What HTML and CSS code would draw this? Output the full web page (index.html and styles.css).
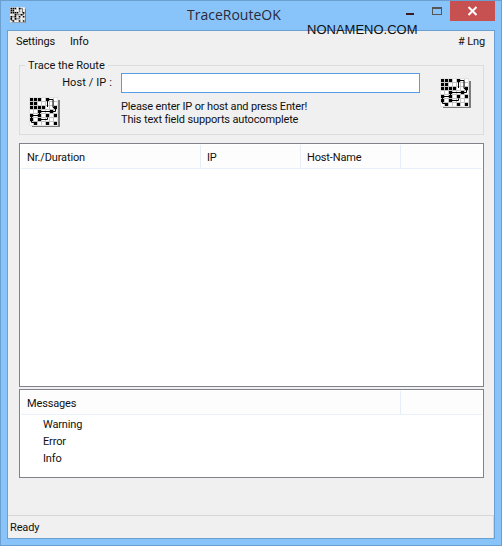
FILE: index.html
```html
<!DOCTYPE html>
<html lang="en">
<head>
    <meta charset="UTF-8">
    <meta name="viewport" content="width=device-width, initial-scale=1.0">
    <title>TraceRouteOK</title>
    <link rel="stylesheet" href="styles.css">
</head>
<body>

<svg class="defs" width="0" height="0">
    <symbol id="routeIcon" viewBox="0 0 31 30">
        <rect x="3" y="3" width="28" height="27" fill="#7c7c7c"/>
        <rect x="0" y="0" width="29" height="29" fill="#e4e4e4"/>
        <rect x="1" y="1" width="27" height="27" fill="#fff"/>
        <path d="M4.500 1v27M8.500 1v27M12.500 1v27M16.500 1v27M20.500 1v27M24.500 1v27M1 4.500h27M1 8.500h27M1 12.500h27M1 16.500h27M1 20.500h27M1 24.500h27" fill="none" stroke="#c4c4c4" stroke-width="1"/>
        <path d="M1 1h3v3h-3zM5 1h3v3h-3zM9 1h3v3h-3zM17 1h3v3h-3zM1 5h3v3h-3zM5 5h3v3h-3zM1 9h3v3h-3zM5 9h3v3h-3zM9 9h3v3h-3zM13 9h3v3h-3zM25 9h3v3h-3zM9 13h3v3h-3zM21 13h3v3h-3zM1 17h3v3h-3zM9 17h3v3h-3zM17 17h3v3h-3zM25 17h3v3h-3zM1 21h3v3h-3zM9 21h3v3h-3zM5 25h3v3h-3zM17 25h3v3h-3zM25 25h3v3h-3z" fill="#000"/>
        <path d="M18.500 2.500v7.500M18.500 2.500h5.500v8h2.500M26.500 11v3.500h-16v4h-8v7h4M10.500 22.500h8v-2" fill="none" stroke="#000" stroke-width="1"/>
    </symbol>
</svg>

<div class="window">
    <div class="titlebar">
        <svg class="app-icon"><use href="#routeIcon"/></svg>
        <span class="title">TraceRouteOK</span>
        <div class="controls">
            <span class="min-btn"></span>
            <span class="max-btn"></span>
            <span class="close-btn">
                <svg width="11" height="10" viewBox="0 0 11 10"><path d="M1.500 1l8 8M9.500 1l-8 8" stroke="#fff" stroke-width="2"/></svg>
            </span>
        </div>
    </div>
    <div class="watermark">NONAMENO.COM</div>

    <div class="client">
        <div class="menubar">
            <span class="menu-item">Settings</span>
            <span class="menu-item">Info</span>
            <span class="menu-right"># Lng</span>
        </div>

        <div class="content">
            <!-- Host input -->
            <fieldset class="trace-box">
                <legend>Trace the Route</legend>
                <div class="side-left">
                    <label class="host-label" for="host">Host / IP :</label>
                    <svg class="route-icon"><use href="#routeIcon"/></svg>
                </div>
                <div class="host-main">
                    <input type="text" id="host" class="host-input">
                    <p class="hint">Please enter IP or host and press Enter!<br>This text field supports autocomplete</p>
                </div>
                <svg class="route-icon right-icon"><use href="#routeIcon"/></svg>
            </fieldset>

            <!-- Result list -->
            <div class="list results">
                <div class="list-head">
                    <span class="col col-nr">Nr./Duration</span>
                    <span class="col col-ip">IP</span>
                    <span class="col col-host">Host-Name</span>
                    <span class="col-rest"></span>
                </div>
            </div>

            <!-- Messages -->
            <div class="list messages">
                <div class="list-head">
                    <span class="col col-msg">Messages</span>
                    <span class="col-rest"></span>
                </div>
                <ul class="msg-rows">
                    <li>Warning</li>
                    <li>Error</li>
                    <li>Info</li>
                </ul>
            </div>
        </div>

        <div class="statusbar">Ready</div>
    </div>
</div>

</body>
</html>
```

FILE: styles.css
```css
body {
    margin: 0;
    width: 502px;
    height: 546px;
    overflow: hidden;
    font-family: Roboto, "Liberation Sans", sans-serif;
    font-size: 11px;
    letter-spacing: -0.15px;
    color: #111;
}

.defs {
    display: block;
    height: 0;
}

/* Window frame */
.window {
    position: relative;
    box-sizing: border-box;
    width: 502px;
    height: 546px;
    padding: 0 6px 6px;
    background: #88c4fa;
    border: 1px solid #6a9fd0;
    display: flex;
    flex-direction: column;
}

.titlebar {
    height: 29px;
    display: flex;
    align-items: flex-start;
    position: relative;
    flex: none;
}

.app-icon {
    width: 16px;
    height: 16px;
    margin: 6px 0 0 3px;
}

.title {
    position: absolute;
    left: 180px;
    top: 4px;
    font-family: "Open Sans", sans-serif;
    font-size: 14px;
    letter-spacing: 0;
    color: #2a2a3a;
}

.controls {
    margin-left: auto;
    display: flex;
}

.min-btn {
    width: 8px;
    height: 2px;
    background: #3a1c1c;
    margin: 12px 18px 0 0;
}

.max-btn {
    box-sizing: border-box;
    width: 10px;
    height: 8px;
    border: 1px solid #555;
    border-top-width: 2px;
    margin: 6px 8px 0 0;
}

.close-btn {
    width: 45px;
    height: 20px;
    background: #c75050;
    display: flex;
    align-items: center;
    justify-content: center;
}

.watermark {
    position: absolute;
    left: 306px;
    top: 21px;
    font-family: "Liberation Sans", sans-serif;
    font-size: 13px;
    letter-spacing: 0;
    color: #111;
}

/* Client area */
.client {
    flex: 1;
    display: flex;
    flex-direction: column;
    background: #f0f0f0;
    border: 1px solid #6a9fd0;
    min-height: 0;
}

.menubar {
    height: 20px;
    display: flex;
    align-items: center;
    padding: 0 9px 0 8px;
    flex: none;
}

.menu-item {
    margin-right: 15px;
}

.menu-right {
    margin-left: auto;
}

.content {
    flex: 1;
    padding: 6px 10px 0 11px;
}

/* Group box */
.trace-box {
    box-sizing: border-box;
    height: 78px;
    margin: 0;
    padding: 0 12px 0 9px;
    border: 1px solid #dcdcdc;
    display: flex;
}

.trace-box legend {
    margin-left: -4px;
    padding: 2px 3px 0;
    line-height: 14px;
    letter-spacing: 0;
}

.side-left {
    width: 92px;
    flex: none;
}

.host-label {
    display: block;
    text-align: right;
    line-height: 14px;
    margin: 3px 9px 0 0;
    letter-spacing: 0.1px;
}

.route-icon {
    display: block;
    width: 31px;
    height: 30px;
    margin-top: 7px;
}

.host-main {
    flex: 1;
}

.host-input {
    display: block;
    box-sizing: border-box;
    width: 299px;
    height: 20px;
    margin: 0;
    border: 1px solid #569de5;
    background: #fff;
    outline: none;
}

.hint {
    margin: 7px 0 0;
    line-height: 13px;
}

.right-icon {
    margin: 5px 0 0 0;
}

/* List views */
.list {
    box-sizing: border-box;
    background: #fff;
    border: 1px solid #82828c;
}

.results {
    height: 244px;
    margin-top: 8px;
}

.messages {
    height: 89px;
    margin-top: 2px;
}

.list-head {
    height: 23px;
    display: flex;
    margin: 1px 1px 0;
    border-bottom: 1px solid #e8f0fb;
    background: #fdfdfd;
}

.col {
    box-sizing: border-box;
    padding-left: 6px;
    line-height: 25px;
    border-right: 1px solid #e5edf8;
}

.col-nr {
    width: 180px;
}

.col-ip {
    width: 100px;
}

.col-host {
    width: 100px;
}

.col-msg {
    width: 380px;
}

.col-rest {
    flex: 1;
}

.msg-rows {
    list-style: none;
    margin: 0;
    padding: 1px 0 0 23px;
}

.msg-rows li {
    height: 17px;
    line-height: 17px;
}

/* Status bar */
.statusbar {
    flex: none;
    height: 21px;
    padding: 1px 0 0 2px;
    border-top: 1px solid #d7d7d7;
    border-right: 1px solid #d7d7d7;
    line-height: 22px;
}
```
